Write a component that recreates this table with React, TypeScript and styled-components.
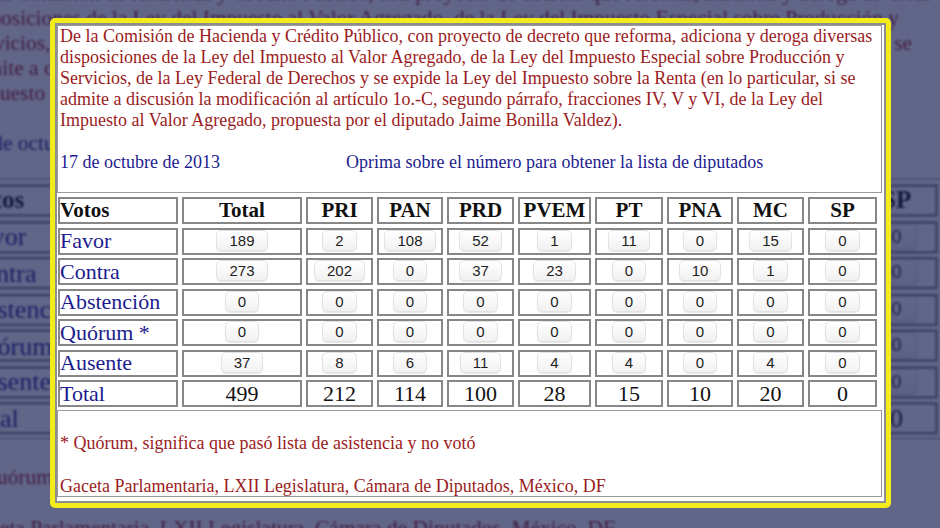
import React from "react";
import styled, { createGlobalStyle } from "styled-components";

const Global = createGlobalStyle`
  html, body { margin: 0; padding: 0; background: #5a6088; }
  #root { width: 940px; height: 528px; }
`;

const RED = "#9b1c22";
const NAVY = "#1c1c8e";
const SERIF = `"Liberation Serif", "Times New Roman", serif`;

const Stage = styled.div`
  position: relative;
  width: 940px;
  height: 528px;
  overflow: hidden;
  background: #ffffff;
  font-family: ${SERIF};
`;

const Backdrop = styled.div`
  position: absolute;
  inset: 0;
  overflow: hidden;
  pointer-events: none;
`;

const Magnified = styled.div`
  transform-origin: 0 0;
  transform: translate(-106px, -50px) scale(1.19);
  filter: blur(1.1px);
`;

const Tint = styled.div`
  position: absolute;
  inset: 0;
  background: rgba(22, 30, 80, 0.68);
`;

const Foreground = styled.div`
  position: relative;
  padding: 18px 0 0 50px;
`;

const Frame = styled.div<{ $plain?: boolean }>`
  box-sizing: border-box;
  width: 841px;
  height: 490px;
  border: 5px solid ${(p) => (p.$plain ? "#ffffff" : "#f3ec1a")};
  border-radius: 5px;
  background: #ffffff;
`;

const Panel = styled.div`
  box-sizing: border-box;
  height: 100%;
  border: 2px solid #8e8e8e;
  padding: 0 2px 0 0;
  display: flex;
  flex-direction: column;
  gap: 4px;
`;

const TopBox = styled.div`
  box-sizing: border-box;
  border: 1px solid #9a9a9a;
  padding: 0 2px 19px 2px;
  font-size: 18px;
  line-height: 21px;
  color: ${RED};
  white-space: nowrap;
`;

const Blank = styled.div`
  height: 21px;
`;

const DateRow = styled.div`
  display: flex;
  color: ${NAVY};
`;

const DateCell = styled.span`
  width: 286px;
`;

const VoteGrid = styled.div`
  display: grid;
  grid-template-columns: 120px 120px 67px 66px 67px 73px 68px 66px 67px 69px;
  grid-auto-rows: 27px;
  column-gap: 4px;
  row-gap: 3.5px;
  margin-left: 1px;
`;

const Cell = styled.div<{ $kind: "head" | "label" | "button" | "total"; $left?: boolean }>`
  box-sizing: border-box;
  border: 2px solid #878787;
  display: flex;
  justify-content: ${(p) => (p.$left ? "flex-start" : "center")};
  align-items: ${(p) => (p.$kind === "button" ? "flex-start" : "center")};
  font-family: ${SERIF};
  font-size: ${(p) => (p.$kind === "head" ? "21px" : "22px")};
  font-weight: ${(p) => (p.$kind === "head" ? 700 : 400)};
  color: ${(p) => (p.$kind === "label" ? NAVY : "#111")};
  white-space: nowrap;
  overflow: hidden;
`;

const CountButton = styled.button`
  box-sizing: border-box;
  height: 21px;
  padding: 0 12px;
  margin: 0;
  font-family: "Liberation Sans", Arial, sans-serif;
  font-size: 15px;
  line-height: 19px;
  color: #1e1e1e;
  border: 1px solid #e2e2e2;
  border-radius: 5px;
  background: linear-gradient(#ffffff, #f1f1f1);
  box-shadow: 0 1px 1px rgba(0, 0, 0, 0.1);
  cursor: pointer;
`;

const FootBox = styled.div`
  box-sizing: border-box;
  margin-top: -1px;
  height: 87px;
  border: 1px solid #9a9a9a;
  padding: 0 2px;
  font-size: 18px;
  line-height: 21.5px;
  color: ${RED};
  white-space: nowrap;
`;

const FootBlank = styled.div`
  height: 21.5px;
`;

const parties = ["Total", "PRI", "PAN", "PRD", "PVEM", "PT", "PNA", "MC", "SP"];

const rows: { label: string; values: number[] }[] = [
  { label: "Favor", values: [189, 2, 108, 52, 1, 11, 0, 15, 0] },
  { label: "Contra", values: [273, 202, 0, 37, 23, 0, 10, 1, 0] },
  { label: "Abstención", values: [0, 0, 0, 0, 0, 0, 0, 0, 0] },
  { label: "Quórum *", values: [0, 0, 0, 0, 0, 0, 0, 0, 0] },
  { label: "Ausente", values: [37, 8, 6, 11, 4, 4, 0, 4, 0] },
];

const totals = [499, 212, 114, 100, 28, 15, 10, 20, 0];

const Sheet: React.FC<{ plain?: boolean }> = ({ plain }) => (
  <Frame $plain={plain}>
    <Panel>
      <TopBox>
        De la Comisión de Hacienda y Crédito Público, con proyecto de decreto que reforma, adiciona y deroga diversas
        <br />
        disposiciones de la Ley del Impuesto al Valor Agregado, de la Ley del Impuesto Especial sobre Producción y
        <br />
        Servicios, de la Ley Federal de Derechos y se expide la Ley del Impuesto sobre la Renta (en lo particular, si se
        <br />
        admite a discusión la modificación al artículo 1o.-C, segundo párrafo, fracciones IV, V y VI, de la Ley del
        <br />
        Impuesto al Valor Agregado, propuesta por el diputado Jaime Bonilla Valdez).
        <Blank />
        <DateRow>
          <DateCell>17 de octubre de 2013</DateCell>
          <span>Oprima sobre el número para obtener la lista de diputados</span>
        </DateRow>
      </TopBox>
      <VoteGrid>
        <Cell $kind="head" $left>
          Votos
        </Cell>
        {parties.map((p) => (
          <Cell key={p} $kind="head">
            {p}
          </Cell>
        ))}
        {rows.map((r) => (
          <React.Fragment key={r.label}>
            <Cell $kind="label" $left>
              {r.label}
            </Cell>
            {r.values.map((v, i) => (
              <Cell key={i} $kind="button">
                <CountButton type="button">{v}</CountButton>
              </Cell>
            ))}
          </React.Fragment>
        ))}
        <Cell $kind="label" $left>
          Total
        </Cell>
        {totals.map((v, i) => (
          <Cell key={i} $kind="total">
            {v}
          </Cell>
        ))}
      </VoteGrid>
      <FootBox>
        <FootBlank />
        * Quórum, significa que pasó lista de asistencia y no votó
        <FootBlank />
        Gaceta Parlamentaria, LXII Legislatura, Cámara de Diputados, México, DF
      </FootBox>
    </Panel>
  </Frame>
);

export default function App() {
  return (
    <>
      <Global />
      <Stage>
        <Backdrop aria-hidden="true">
          <Magnified>
            <Foreground>
              <Sheet plain />
            </Foreground>
          </Magnified>
          <Tint />
        </Backdrop>
        <Foreground>
          <Sheet />
        </Foreground>
      </Stage>
    </>
  );
}
